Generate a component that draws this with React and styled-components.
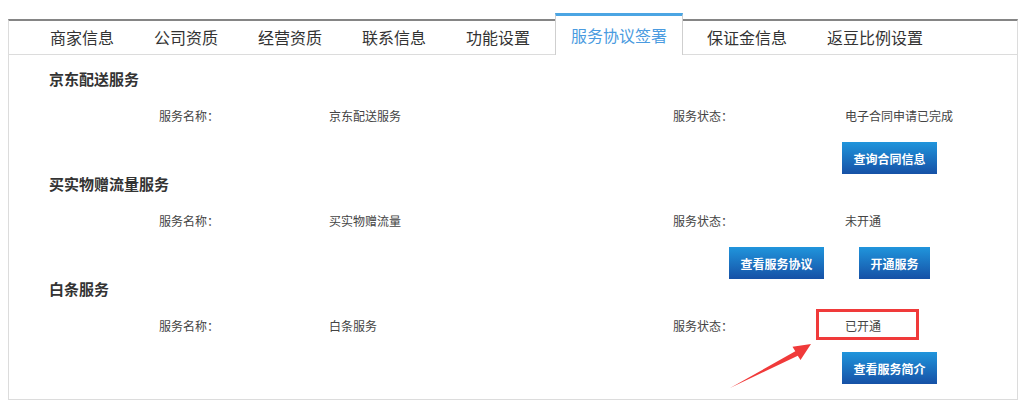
import React from 'react';
import styled, { createGlobalStyle } from 'styled-components';

const GlobalStyle = createGlobalStyle`
  body {
    margin: 8px;
    background: #fff;
    font-family: "Noto Sans CJK SC", "Noto Sans", sans-serif;
    color: #333;
  }
`;

const Panel = styled.div`
  box-sizing: border-box;
  width: 1010px;
  margin-top: 11px;
  border: 1px solid #dcdcdc;
  border-top: 2px solid #858585;
`;

const TabBar = styled.div`
  display: flex;
  align-items: flex-start;
  height: 33px;
  padding-left: 21px;
  border-bottom: 1px solid #dcdcdc;
`;

const Tab = styled.div`
  box-sizing: border-box;
  margin: 0 4px;
  padding: 0 16px;
  height: 33px;
  line-height: 33px;
  font-size: 16px;
  color: #333;
  white-space: nowrap;
  background: #fff;

  ${({ $active }) => $active && `
    margin: -8px 4px 0 5px;
    height: 42px;
    line-height: 38px;
    padding: 0 15px;
    color: #4a9be0;
    border-top: 3px solid #4ba5e3;
    border-left: 1px solid #cfcfcf;
    border-right: 1px solid #cfcfcf;
  `}
`;

const Content = styled.div`
  padding: 14px 0 15px;
`;

const Section = styled.div`
  display: flex;
  flex-direction: column;
`;

const Title = styled.div`
  padding-left: 40px;
  height: 20px;
  line-height: 20px;
  font-size: 15px;
  font-weight: bold;
  color: #333;
`;

const InfoRow = styled.div`
  display: grid;
  grid-template-columns: 170px 344px 172px 1fr;
  margin-top: 17px;
  padding-left: 150px;
  height: 20px;
  line-height: 20px;
  font-size: 12px;
  color: #444;
`;

const Cell = styled.span`
  position: relative;
`;

const Actions = styled.div`
  display: flex;
  justify-content: flex-end;
  gap: 35px;
  margin-top: 16px;
  padding-right: ${({ $pr }) => $pr}px;
`;

const Button = styled.button`
  height: 32px;
  padding: 0 11.5px;
  border: none;
  background: linear-gradient(#2095dc, #1651a6);
  color: #fff;
  font-family: "Noto Sans CJK SC", sans-serif;
  font-size: 12px;
  font-weight: bold;
  cursor: pointer;
`;

const Highlight = styled.span`
  position: absolute;
  left: -29px;
  top: -7px;
  width: 103px;
  height: 31px;
  box-sizing: border-box;
  border: 3px solid #f03a3a;
  pointer-events: none;
`;

const Arrow = styled.svg`
  position: absolute;
  left: -117px;
  top: 26px;
  width: 84px;
  height: 48px;
  overflow: visible;
`;

const tabs = ['商家信息', '公司资质', '经营资质', '联系信息', '功能设置', '服务协议签署', '保证金信息', '返豆比例设置'];

const services = [
  { title: '京东配送服务', name: '京东配送服务', status: '电子合同申请已完成', buttons: ['查询合同信息'], pr: 80 },
  { title: '买实物赠流量服务', name: '买实物赠流量', status: '未开通', buttons: ['查看服务协议', '开通服务'], pr: 87 },
  { title: '白条服务', name: '白条服务', status: '已开通', buttons: ['查看服务简介'], pr: 80, marked: true },
];

export default function App() {
  return (
    <>
      <GlobalStyle />
      <Panel>
        <TabBar>
          {tabs.map((t) => (
            <Tab key={t} $active={t === '服务协议签署'}>{t}</Tab>
          ))}
        </TabBar>
        <Content>
          {services.map((s) => (
            <Section key={s.title}>
              <Title>{s.title}</Title>
              <InfoRow>
                <span>服务名称：</span>
                <span>{s.name}</span>
                <span>服务状态：</span>
                <Cell>
                  {s.status}
                  {s.marked && (
                    <>
                      <Highlight />
                      <Arrow viewBox="0 0 84 48">
                        <polygon
                          points="2,46 67.3,9.3 64.5,4.8 83,2 72.5,18 69.8,13.8"
                          fill="#f03a3a"
                        />
                      </Arrow>
                    </>
                  )}
                </Cell>
              </InfoRow>
              <Actions $pr={s.pr}>
                {s.buttons.map((b) => (
                  <Button key={b}>{b}</Button>
                ))}
              </Actions>
            </Section>
          ))}
        </Content>
      </Panel>
    </>
  );
}
